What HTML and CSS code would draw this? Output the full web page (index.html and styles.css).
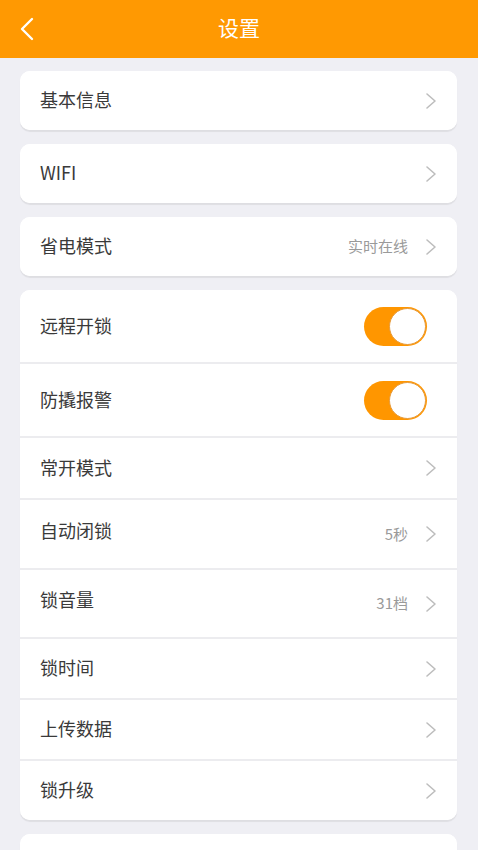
FILE: index.html
```html
<!DOCTYPE html>
<html lang="zh">
<head>
<meta charset="utf-8">
<title>设置</title>
<link rel="stylesheet" href="styles.css">
</head>
<body>
<header class="topbar">
  <svg class="back" width="16" height="24" viewBox="0 0 16 24"><polyline points="13,2 3,12 13,22" fill="none" stroke="#fff" stroke-width="2.4" stroke-linecap="round" stroke-linejoin="round"/></svg>
  <h1 class="title">设置</h1>
</header>
<main class="content">
  <section class="card">
    <div class="row row--single"><span class="label">基本信息</span><span class="right"><svg class="chev" viewBox="0 0 12 18"><polyline points="2,2 10,9 2,16" fill="none" stroke="#bdbdbd" stroke-width="1.6" stroke-linejoin="round" stroke-linecap="round"/></svg></span></div>
  </section>
  <section class="card">
    <div class="row row--single"><span class="label">WIFI</span><span class="right"><svg class="chev" viewBox="0 0 12 18"><polyline points="2,2 10,9 2,16" fill="none" stroke="#bdbdbd" stroke-width="1.6" stroke-linejoin="round" stroke-linecap="round"/></svg></span></div>
  </section>
  <section class="card">
    <div class="row row--single"><span class="label">省电模式</span><span class="right"><span class="value">实时在线</span><svg class="chev" viewBox="0 0 12 18"><polyline points="2,2 10,9 2,16" fill="none" stroke="#bdbdbd" stroke-width="1.6" stroke-linejoin="round" stroke-linecap="round"/></svg></span></div>
  </section>
  <section class="card">
    <div class="row h72"><span class="label">远程开锁</span><span class="toggle"><span class="knob"></span></span></div>
    <div class="row h72"><span class="label">防撬报警</span><span class="toggle"><span class="knob"></span></span></div>
    <div class="row h60"><span class="label">常开模式</span><span class="right"><svg class="chev" viewBox="0 0 12 18"><polyline points="2,2 10,9 2,16" fill="none" stroke="#bdbdbd" stroke-width="1.6" stroke-linejoin="round" stroke-linecap="round"/></svg></span></div>
    <div class="row h68 raised"><span class="label">自动闭锁</span><span class="right"><span class="value">5秒</span><svg class="chev" viewBox="0 0 12 18"><polyline points="2,2 10,9 2,16" fill="none" stroke="#bdbdbd" stroke-width="1.6" stroke-linejoin="round" stroke-linecap="round"/></svg></span></div>
    <div class="row h67 raised"><span class="label">锁音量</span><span class="right"><span class="value">31档</span><svg class="chev" viewBox="0 0 12 18"><polyline points="2,2 10,9 2,16" fill="none" stroke="#bdbdbd" stroke-width="1.6" stroke-linejoin="round" stroke-linecap="round"/></svg></span></div>
    <div class="row h59"><span class="label">锁时间</span><span class="right"><svg class="chev" viewBox="0 0 12 18"><polyline points="2,2 10,9 2,16" fill="none" stroke="#bdbdbd" stroke-width="1.6" stroke-linejoin="round" stroke-linecap="round"/></svg></span></div>
    <div class="row h59"><span class="label">上传数据</span><span class="right"><svg class="chev" viewBox="0 0 12 18"><polyline points="2,2 10,9 2,16" fill="none" stroke="#bdbdbd" stroke-width="1.6" stroke-linejoin="round" stroke-linecap="round"/></svg></span></div>
    <div class="row h59"><span class="label">锁升级</span><span class="right"><svg class="chev" viewBox="0 0 12 18"><polyline points="2,2 10,9 2,16" fill="none" stroke="#bdbdbd" stroke-width="1.6" stroke-linejoin="round" stroke-linecap="round"/></svg></span></div>
  </section>
  <section class="card">
    <div class="row row--single"></div>
  </section>
</main>
</body>
</html>
```
FILE: styles.css
```css
* { box-sizing: border-box; }
html, body { margin: 0; padding: 0; }
body {
  background: #efeff4;
  font-family: "Noto Sans CJK SC", "Noto Sans", sans-serif;
  color: #333;
  width: 478px;
  height: 850px;
  overflow: hidden;
}
.topbar {
  height: 58px;
  background: #ff9902;
  display: flex;
  align-items: center;
  justify-content: center;
  position: relative;
}
.back {
  position: absolute;
  left: 19px;
  top: 17px;
}
.title {
  margin: 0;
  padding-bottom: 3px;
  font-size: 21px;
  font-weight: 400;
  color: #fff;
  line-height: 1;
}
.content {
  padding: 13px 21px 0 20px;
  display: flex;
  flex-direction: column;
  gap: 14px;
}
.card {
  background: #fff;
  border-radius: 10px;
  box-shadow: 0 2px 1px rgba(0, 0, 0, 0.07);
  display: flex;
  flex-direction: column;
  gap: 2px;
  overflow: hidden;
}
.card .row + .row {
  box-shadow: 0 -2px 0 #ececef;
}
.row {
  display: flex;
  align-items: center;
  justify-content: space-between;
  padding: 0 20px 0 20px;
  background: #fff;
  font-size: 18px;
}
.row--single { height: 59px; }
.h72 { height: 72px; }
.h60 { height: 60px; }
.h68 { height: 68px; }
.h67 { height: 67px; }
.h59 { height: 59px; }
.label {
  color: #3a3a3a;
  line-height: 1;
  padding-bottom: 3px;
}
.raised .label { padding-bottom: 9px; }
.right {
  display: flex;
  align-items: center;
  gap: 17px;
}
.value {
  font-size: 15px;
  color: #9a9a9a;
  line-height: 1;
  padding-bottom: 2px;
}
.chev {
  width: 12px;
  height: 18px;
  display: block;
}
.toggle {
  width: 63px;
  height: 39px;
  margin-right: 10px;
  border-radius: 20px;
  background: #ff9600;
  display: flex;
  align-items: center;
  justify-content: flex-end;
  padding: 1px;
}
.knob {
  width: 37px;
  height: 37px;
  border-radius: 50%;
  background: #fff;
  border: 1.5px solid #e69a3a;
}
```
